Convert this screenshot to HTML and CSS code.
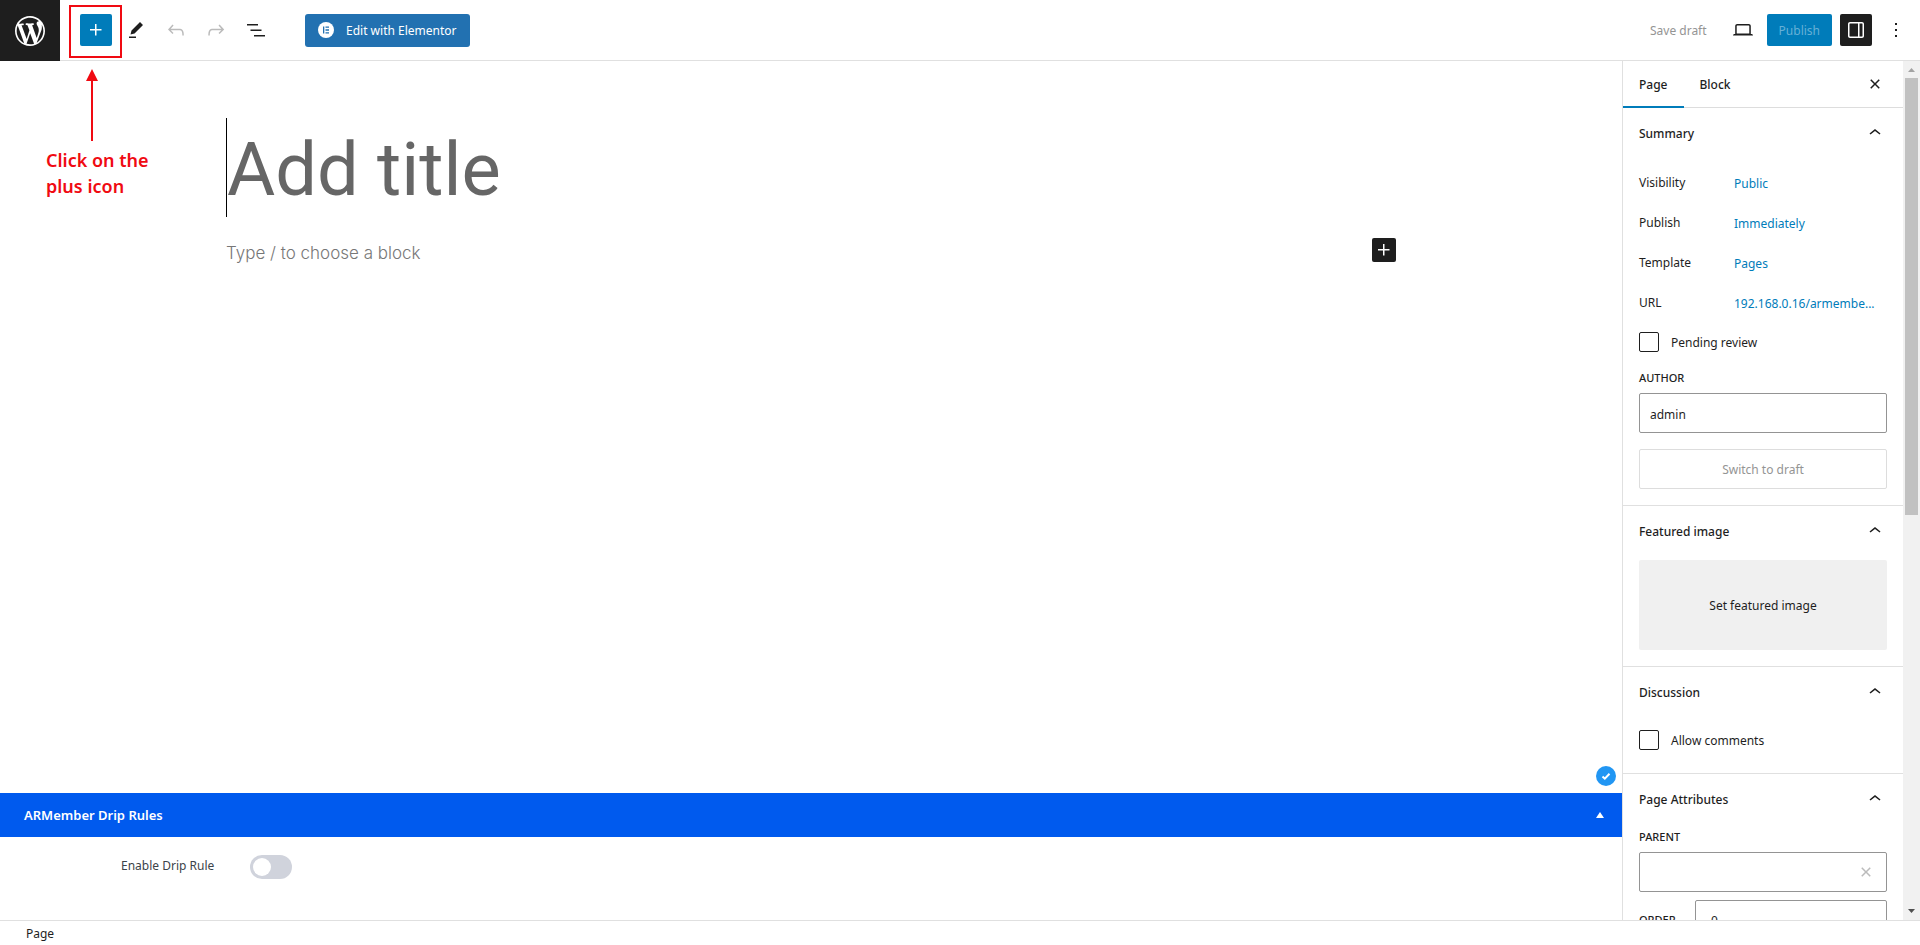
FILE: index.html
```
<!DOCTYPE html>
<html lang="en">
<head>
    <meta charset="UTF-8">
    <meta name="viewport" content="width=device-width, initial-scale=1.0">
    <title>Add New Page - WordPress</title>
    <link rel="stylesheet" href="styles.css">
</head>
<body>
    <div class="editor">
        <!-- Top toolbar -->
        <header class="header">
            <a class="wp-logo" href="#" aria-label="View Pages">
                <svg viewBox="-2 -2 24 24"><path d="M20 10c0-5.51-4.49-10-10-10C4.48 0 0 4.49 0 10c0 5.52 4.48 10 10 10 5.51 0 10-4.48 10-10zM7.78 15.37L4.37 6.22c.55-.02 1.17-.08 1.17-.08.5-.06.44-1.13-.06-1.11 0 0-1.45.11-2.37.11-.18 0-.37 0-.58-.01C4.12 2.69 6.87 1.11 10 1.11c2.33 0 4.45.87 6.05 2.34-.68-.11-1.65.39-1.65 1.58 0 .74.45 1.36.9 2.1.35.61.55 1.36.55 2.46 0 1.49-1.4 5-1.4 5l-3.03-8.37c.54-.02.82-.17.82-.17.5-.05.44-1.25-.06-1.22 0 0-1.44.12-2.38.12-.87 0-2.33-.12-2.33-.12-.5-.03-.56 1.2-.06 1.22l.92.08 1.26 3.41zM17.41 10c.24-.64.74-1.87.43-4.25.7 1.29 1.05 2.71 1.05 4.25 0 3.29-1.73 6.24-4.4 7.78.97-2.59 1.94-5.2 2.92-7.78zM6.1 18.09C3.12 16.65 1.11 13.53 1.11 10c0-1.3.23-2.48.72-3.59C3.25 10.3 4.67 14.2 6.1 18.09zm4.03-6.63l2.58 6.98c-.86.29-1.76.45-2.71.45-.79 0-1.57-.11-2.29-.33.81-2.38 1.62-4.74 2.42-7.1z"/></svg>
            </a>
            <div class="toolbar">
                <button type="button" class="icon-btn primary" aria-label="Toggle block inserter">
                    <svg viewBox="0 0 24 24"><path d="M11 12.5V17.5H12.5V12.5H17.5V11H12.5V6H11V11H6V12.5H11Z"/></svg>
                </button>
                <button type="button" class="icon-btn" aria-label="Tools">
                    <svg viewBox="0 0 24 24"><path d="m19 7-3-3-8.5 8.5-1 4 4-1L19 7Zm-7 11.5H5V20h7v-1.5Z"/></svg>
                </button>
                <button type="button" class="icon-btn" aria-label="Undo" disabled>
                    <svg viewBox="0 0 24 24"><path d="M18.3 11.7c-.6-.6-1.4-.9-2.3-.9H6.7l2.9-3.3-1.1-1-4.5 5L8.5 16l1-1-2.7-2.7H16c.5 0 .9.2 1.3.5 1 1 1 3.4 1 4.5v.3h1.5v-.2c0-1.5 0-4.3-1.5-5.7z"/></svg>
                </button>
                <button type="button" class="icon-btn" aria-label="Redo" disabled>
                    <svg viewBox="0 0 24 24"><path d="M15.6 6.5l-1.1 1 2.9 3.3H8c-.9 0-1.7.3-2.3.9-1.4 1.5-1.4 4.2-1.4 5.6v.2h1.5v-.3c0-1.1 0-3.5 1-4.5.3-.3.7-.5 1.3-.5h9.2L14.5 15l1.1 1.1 4.6-4.6-4.6-5z"/></svg>
                </button>
                <button type="button" class="icon-btn" aria-label="Document overview">
                    <svg viewBox="0 0 24 24"><path d="M3 6h11v1.5H3V6Zm3.5 5.5h11V13h-11v-1.5ZM21 17H10v1.5h11V17Z"/></svg>
                </button>
            </div>
            <button type="button" class="elementor-btn">
                <svg viewBox="0 0 16 16"><circle cx="8" cy="8" r="8"/><path class="cut" d="M5 4.5h1.3v7H5zM7.5 4.5H11v1.3H7.5zM7.5 7.35H11v1.3H7.5zM7.5 10.2H11v1.3H7.5z"/></svg>
                <span>Edit with Elementor</span>
            </button>
            <div class="settings">
                <button type="button" class="text-btn" disabled>Save draft</button>
                <button type="button" class="icon-btn" aria-label="Preview">
                    <svg viewBox="0 0 24 24"><path d="M20.5 16h-.7V8c0-1.1-.9-2-2-2H6.2c-1.1 0-2 .9-2 2v8h-.7c-.8 0-1.5.7-1.5 1.5h20c0-.8-.7-1.5-1.5-1.5zM5.7 8c0-.3.2-.5.5-.5h11.6c.3 0 .5.2.5.5v7.6H5.7V8z"/></svg>
                </button>
                <button type="button" class="publish-btn" aria-disabled="true">Publish</button>
                <button type="button" class="icon-btn pressed" aria-label="Settings">
                    <svg viewBox="0 0 24 24"><path d="M18 4H6c-1.1 0-2 .9-2 2v12c0 1.1.9 2 2 2h12c1.1 0 2-.9 2-2V6c0-1.1-.9-2-2-2zm-4 14.5H6c-.3 0-.5-.2-.5-.5V6c0-.3.2-.5.5-.5h8v13zm4.5-.5c0 .3-.2.5-.5.5h-2.5v-13H18c.3 0 .5.2.5.5v12z"/></svg>
                </button>
                <button type="button" class="icon-btn" aria-label="Options">
                    <svg viewBox="0 0 24 24"><path d="M13 19h-2v-2h2v2zm0-6h-2v-2h2v2zm0-6h-2V5h2v2z"/></svg>
                </button>
            </div>
        </header>

        <div class="body">
            <main class="content">
                <div class="canvas">
                    <div class="post">
                        <input type="text" class="post-title" placeholder="Add title" aria-label="Add title">
                        <div class="block-row">
                            <input type="text" class="block-input" placeholder="Type / to choose a block" aria-label="Empty block">
                            <button type="button" class="block-add" aria-label="Add block">
                                <svg viewBox="0 0 24 24"><path d="M11 12.5V17.5H12.5V12.5H17.5V11H12.5V6H11V11H6V12.5H11Z"/></svg>
                            </button>
                        </div>
                    </div>
                    <span class="check-badge">
                        <svg viewBox="0 0 20 20"><path d="M6.5 10.5l2.3 2.2 4.7-5"/></svg>
                    </span>
                </div>

                <section class="metabox">
                    <h2 class="metabox-title">
                        ARMember Drip Rules
                        <svg viewBox="0 0 8 6"><path d="M4 0l4 6H0z"/></svg>
                    </h2>
                    <div class="metabox-field">
                        <label for="dripRule">Enable Drip Rule</label>
                        <input type="checkbox" id="dripRule" class="switch">
                    </div>
                </section>
            </main>

            <aside class="sidebar">
                <div class="sidebar-scroll">
                    <div class="tabs">
                        <button type="button" class="tab active">Page</button>
                        <button type="button" class="tab">Block</button>
                        <button type="button" class="close-btn" aria-label="Close settings">
                            <svg viewBox="0 0 24 24"><path d="M12 13.06l3.712 3.713 1.061-1.06L13.061 12l3.712-3.712-1.06-1.06L12 10.938 8.288 7.227l-1.061 1.06L10.939 12l-3.712 3.712 1.06 1.061L12 13.061z"/></svg>
                        </button>
                    </div>

                    <section class="panel">
                        <button type="button" class="panel-title">Summary
                            <svg viewBox="0 0 24 24"><path d="M6.5 12.4L12 8l5.5 4.4-.9 1.2L12 10l-4.5 3.6-1-1.2z"/></svg>
                        </button>
                        <div class="summary">
                            <span>Visibility</span><a href="#">Public</a>
                            <span>Publish</span><a href="#">Immediately</a>
                            <span>Template</span><a href="#">Pages</a>
                            <span>URL</span><a href="#">192.168.0.16/armembe...</a>
                        </div>
                        <div class="check">
                            <input type="checkbox" id="pending">
                            <label for="pending">Pending review</label>
                        </div>
                        <label class="caption" for="author">Author</label>
                        <input type="text" class="field" id="author" value="admin">
                        <button type="button" class="draft-btn" disabled>Switch to draft</button>
                    </section>

                    <section class="panel">
                        <button type="button" class="panel-title">Featured image
                            <svg viewBox="0 0 24 24"><path d="M6.5 12.4L12 8l5.5 4.4-.9 1.2L12 10l-4.5 3.6-1-1.2z"/></svg>
                        </button>
                        <button type="button" class="featured-btn">Set featured image</button>
                    </section>

                    <section class="panel">
                        <button type="button" class="panel-title">Discussion
                            <svg viewBox="0 0 24 24"><path d="M6.5 12.4L12 8l5.5 4.4-.9 1.2L12 10l-4.5 3.6-1-1.2z"/></svg>
                        </button>
                        <div class="check discussion">
                            <input type="checkbox" id="comments">
                            <label for="comments">Allow comments</label>
                        </div>
                    </section>

                    <section class="panel">
                        <button type="button" class="panel-title">Page Attributes
                            <svg viewBox="0 0 24 24"><path d="M6.5 12.4L12 8l5.5 4.4-.9 1.2L12 10l-4.5 3.6-1-1.2z"/></svg>
                        </button>
                        <div class="attributes">
                            <label class="caption" for="parent">Parent</label>
                            <div class="field combo">
                                <input type="text" id="parent">
                                <button type="button" aria-label="Reset">
                                    <svg viewBox="0 0 24 24"><path d="M12 13.06l3.712 3.713 1.061-1.06L13.061 12l3.712-3.712-1.06-1.06L12 10.938 8.288 7.227l-1.061 1.06L10.939 12l-3.712 3.712 1.06 1.061L12 13.061z"/></svg>
                                </button>
                            </div>
                            <div class="order">
                                <label class="caption" for="order">Order</label>
                                <input type="text" class="field" id="order" value="0">
                            </div>
                        </div>
                    </section>
                </div>
                <div class="scrollbar" aria-hidden="true">
                    <svg class="arrow dim" viewBox="0 0 17 17"><path d="M5 11h7L8.5 7z"/></svg>
                    <div class="track"><div class="thumb"></div></div>
                    <svg class="arrow" viewBox="0 0 17 17"><path d="M5 6h7l-3.5 4z"/></svg>
                </div>
            </aside>
        </div>

        <footer class="footer">Page</footer>

        <!-- Tutorial callout over the inserter button -->
        <div class="callout-box"></div>
        <div class="callout">
            <svg viewBox="0 0 12 72"><path d="M6 0l6 12H7v60H5V12H0z"/></svg>
            <p>Click on the<br>plus icon</p>
        </div>
    </div>
</body>
</html>
```
FILE: styles.css
```
* {
    margin: 0;
    padding: 0;
    box-sizing: border-box;
}

body {
    font-family: 'Noto Sans', 'Open Sans', sans-serif;
    font-size: 12px;
    line-height: 20px;
    color: #1e1e1e;
    background-color: #fff;
}

button,
input {
    font: inherit;
    color: inherit;
    background: none;
    border: none;
    outline: none;
}

button {
    cursor: pointer;
}

a {
    color: #007cba;
    text-decoration: none;
}

svg {
    display: block;
    fill: currentColor;
}

.editor {
    position: relative;
    height: 100vh;
    display: flex;
    flex-direction: column;
    overflow: hidden;
}

/* Header */
.header {
    display: flex;
    align-items: center;
    height: 61px;
    flex-shrink: 0;
    padding-right: 8px;
    border-bottom: 1px solid #e0e0e0;
}

.wp-logo {
    width: 60px;
    height: 61px;
    display: flex;
    align-items: center;
    justify-content: center;
    align-self: flex-start;
    color: #fff;
    background-color: #1e1e1e;
}

.wp-logo svg {
    width: 36px;
    height: 36px;
}

.toolbar {
    display: flex;
    gap: 8px;
    margin-left: 20px;
}

.icon-btn {
    width: 32px;
    height: 32px;
    display: flex;
    align-items: center;
    justify-content: center;
    border-radius: 2px;
}

.icon-btn svg {
    width: 24px;
    height: 24px;
}

.icon-btn:disabled {
    color: #bbb;
}

.icon-btn.primary {
    color: #fff;
    background-color: #007cba;
}

.icon-btn.pressed {
    color: #fff;
    background-color: #1e1e1e;
}

.elementor-btn {
    display: flex;
    align-items: center;
    gap: 12px;
    height: 33px;
    margin-left: 33px;
    padding: 0 13px;
    color: #fff;
    background-color: #2271b1;
    border-radius: 3px;
}

.elementor-btn span {
    padding-top: 2px;
}

.elementor-btn svg {
    width: 16px;
    height: 16px;
}

.elementor-btn .cut {
    fill: #2271b1;
}

.settings {
    display: flex;
    gap: 8px;
    margin-left: auto;
}

.text-btn {
    padding: 2px 12px 0;
    color: #949494;
}

.publish-btn {
    padding: 2px 12px 0;
    color: #66b0d6;
    background-color: #007cba;
    border-radius: 2px;
}

/* Canvas */
.body {
    display: flex;
    flex: 1;
    min-height: 0;
}

.content {
    flex: 1;
    display: flex;
    flex-direction: column;
    min-width: 0;
}

.canvas {
    position: relative;
    flex: 1;
    padding: 57px 24px 0;
}

.post {
    max-width: 1170px;
    margin: 0 auto;
}

.post-title {
    display: block;
    width: 100%;
    height: 99px;
    padding-top: 4px;
    font-family: Roboto, sans-serif;
    font-size: 74px;
    font-weight: 400;
    border-left: 1px solid #000;
}

.post-title::placeholder {
    color: #666;
    opacity: 1;
}

.block-row {
    display: flex;
    align-items: center;
    margin-top: 21px;
}

.block-input {
    flex: 1;
    height: 30px;
    font-family: Inter, sans-serif;
    font-size: 17px;
    font-weight: 300;
}

.block-input::placeholder {
    color: #777;
    opacity: 1;
}

.block-add {
    width: 24px;
    height: 24px;
    align-self: flex-start;
    color: #fff;
    background-color: #1e1e1e;
    border-radius: 2px;
}

.check-badge {
    position: absolute;
    right: 6px;
    bottom: 7px;
    width: 20px;
    height: 20px;
    border-radius: 50%;
    background-color: #2196f3;
}

.check-badge path {
    fill: none;
    stroke: #fff;
    stroke-width: 2;
}

/* Meta box */
.metabox-title {
    display: flex;
    align-items: center;
    justify-content: space-between;
    height: 44px;
    padding: 0 18px 0 24px;
    font-size: 13px;
    font-weight: 600;
    color: #fff;
    background-color: #005aee;
}

.metabox-title svg {
    width: 8px;
    height: 6px;
}

.metabox-field {
    display: flex;
    align-items: center;
    gap: 36px;
    height: 83px;
    padding: 0 0 23px 121px;
    color: #3c434a;
}

.metabox-field label {
    padding-bottom: 2px;
}

.switch {
    appearance: none;
    display: flex;
    align-items: center;
    width: 42px;
    height: 24px;
    padding: 0 3px;
    border-radius: 12px;
    background-color: #d0d3dc;
}

.switch::before {
    content: '';
    width: 18px;
    height: 18px;
    border-radius: 50%;
    background-color: #fff;
}

/* Sidebar */
.sidebar {
    display: flex;
    width: 298px;
    border-left: 1px solid #e0e0e0;
}

.sidebar-scroll {
    flex: 1;
    min-width: 0;
    overflow: hidden;
}

.tabs {
    display: flex;
    align-items: center;
    height: 47px;
    padding-right: 16px;
    border-bottom: 1px solid #ddd;
}

.tab {
    height: 47px;
    padding: 2px 16px 0;
    font-weight: 500;
}

.tab.active {
    box-shadow: inset 0 -2px #007cba;
}

.close-btn {
    margin-left: auto;
}

.close-btn svg,
.panel-title svg {
    width: 24px;
    height: 24px;
}

.panel {
    padding: 0 16px 16px;
    border-bottom: 1px solid #e0e0e0;
}

.panel-title {
    display: flex;
    align-items: center;
    justify-content: space-between;
    width: 100%;
    height: 50px;
    padding-top: 2px;
    font-weight: 500;
}

.panel-title svg {
    margin-bottom: 2px;
}

.summary {
    display: grid;
    grid-template-columns: 95px 1fr;
    grid-auto-rows: 40px;
    align-items: center;
    margin-top: 5px;
}

.summary a {
    padding-top: 2px;
    white-space: nowrap;
}

.check {
    display: flex;
    align-items: center;
    gap: 12px;
    height: 20px;
    margin: 9px 0 16px;
}

.check.discussion {
    margin: 13px 0 7px;
}

.check input {
    appearance: none;
    width: 20px;
    height: 20px;
    border: 1px solid #1e1e1e;
    border-radius: 2px;
}

.check label {
    padding-top: 2px;
}

.caption {
    display: block;
    margin-bottom: 5px;
    font-size: 11px;
    font-weight: 500;
    text-transform: uppercase;
}

.field {
    display: block;
    width: 100%;
    height: 40px;
    padding: 2px 10px 0;
    border: 1px solid #949494;
    border-radius: 2px;
}

.combo {
    display: flex;
    align-items: center;
    padding: 0 8px 0 10px;
}

.combo input {
    flex: 1;
    min-width: 0;
}

.combo button {
    color: #bbb;
}

.combo svg {
    width: 24px;
    height: 24px;
}

.draft-btn {
    width: 100%;
    height: 40px;
    margin-top: 16px;
    padding-top: 2px;
    color: #949494;
    border: 1px solid #ddd;
    border-radius: 2px;
}

.featured-btn {
    display: block;
    width: 100%;
    height: 90px;
    margin-top: 4px;
    padding-top: 2px;
    background-color: #f0f0f0;
    border-radius: 2px;
}

.attributes {
    padding-top: 3px;
}

.order {
    display: flex;
    align-items: center;
    margin-top: 8px;
}

.order .caption {
    width: 56px;
    flex-shrink: 0;
    margin: 0;
}

.order .field {
    padding: 0 15px;
}

.scrollbar {
    display: flex;
    flex-direction: column;
    width: 17px;
    background-color: #f1f1f1;
}

.track {
    flex: 1;
    padding: 0 2px;
}

.thumb {
    height: 53%;
    background-color: #c1c1c1;
}

.arrow {
    width: 17px;
    height: 17px;
    fill: #505050;
}

.arrow.dim {
    fill: #a3a3a3;
}

.footer {
    flex-shrink: 0;
    height: 25px;
    padding: 1px 26px 0;
    line-height: 24px;
    border-top: 1px solid #e0e0e0;
}

/* Callout */
.callout-box {
    position: absolute;
    top: 5px;
    left: 69px;
    width: 53px;
    height: 53px;
    border: 2px solid #f00a12;
}

.callout {
    position: absolute;
    top: 69px;
    left: 46px;
    color: #f00a12;
    font-size: 18px;
    font-weight: 600;
    line-height: 26px;
}

.callout svg {
    width: 12px;
    height: 72px;
    margin: 0 0 6px 40px;
}
```
